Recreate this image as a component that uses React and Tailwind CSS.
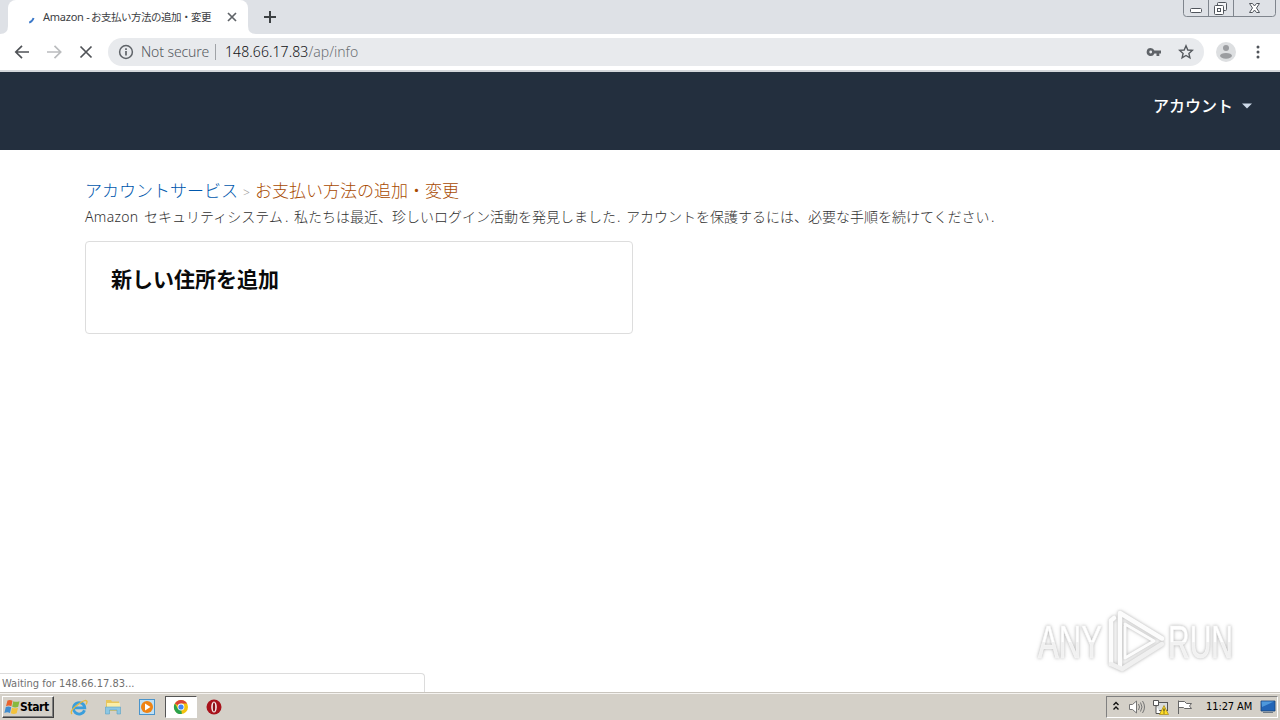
import React from "react";

const UI = "font-['DejaVu_Sans_Condensed','DejaVu_Sans','Noto_Sans_CJK_JP',sans-serif]";
const WEB = "font-['Noto_Sans','Noto_Sans_CJK_JP',sans-serif]";
const JP = "font-['Noto_Sans_CJK_JP',sans-serif]";

function TabStrip() {
  return (
    <div className="flex h-[34px] shrink-0 items-start justify-between bg-[#dee1e6]">
      <div className="flex h-full">
        <svg width="8" height="34" className="shrink-0"><path d="M0 34Q8 34 8 26V34Z" fill="#fff" /></svg>
        <div className="flex h-full w-[240px] items-center rounded-t-lg bg-white">
          <svg width="8" height="8" viewBox="0 0 8 8" className="ml-[20px] mt-[5px] shrink-0">
            <path d="M1.200 6.600Q4.400 5.600 5.600 2" fill="none" stroke="#3b78c9" strokeWidth="1.900" />
          </svg>
          <div className={`${WEB} ml-[7px] flex w-[178px] whitespace-nowrap text-[11px] leading-[14px] text-[#3c4043]`}>
            <span className="w-[48px] shrink-0 tracking-[-0.25px]">Amazon -</span>
            <span className={`${JP} text-[10.5px] tracking-[-0.5px]`}>お支払い方法の追加・変更</span>
          </div>
          <svg width="12" height="12" viewBox="0 0 12 12" className="ml-[5px] shrink-0">
            <path d="M2 2L10 10M10 2L2 10" stroke="#5f6368" strokeWidth="1.700" />
          </svg>
        </div>
        <svg width="8" height="34" className="shrink-0"><path d="M8 34Q0 34 0 26V34Z" fill="#fff" /></svg>
        <svg width="14" height="14" viewBox="0 0 14 14" className="ml-[7px] mt-[10px]">
          <path d="M7 1V13M1 7H13" stroke="#3c4043" strokeWidth="2" />
        </svg>
      </div>
      <svg width="94" height="18" viewBox="0 0 94 18" className="mr-[3px]" fill="none">
        <path d="M.5 0V13.5Q.5 16.5 3.5 16.5H89.5Q92.5 16.5 92.5 13.5V0M25.5 0V16M50.5 0V16" stroke="#7f858d" />
        <rect x="7.500" y="8.500" width="11" height="4" rx="1" fill="#fff" stroke="#50555c" />
        <rect x="34.500" y="2.500" width="9" height="8" rx="1" fill="#f3f4f6" stroke="#50555c" />
        <rect x="31.500" y="5.500" width="9" height="9" rx="1" fill="#fff" stroke="#50555c" />
        <rect x="34.500" y="8.500" width="3" height="3" stroke="#50555c" />
        <path d="M66.500 3.500H69.500L71.500 6L73.500 3.500H76.500L73.500 8L76.500 12.500H73.500L71.500 10L69.500 12.500H66.500L69.500 8Z" fill="#fff" stroke="#50555c" />
      </svg>
    </div>
  );
}

function Toolbar() {
  return (
    <div className="flex h-[38px] shrink-0 items-start border-b-2 border-[#d4d7db] bg-white pt-[4px]">
      <svg width="94" height="28" viewBox="0 0 94 28" className="ml-[8px] shrink-0" fill="none" strokeWidth="1.700">
        <path d="M21 14H8.500M14 7.800L7.800 14L14 20.200" stroke="#505357" />
        <path d="M39 14H52M46.500 7.800L52.700 14L46.500 20.200" stroke="#babcbe" />
        <path d="M72.500 8.500L83.500 19.500M83.500 8.500L72.500 19.500" stroke="#505357" />
      </svg>
      <div className={`${WEB} ml-[6px] flex h-[28px] w-[1096px] shrink-0 items-center rounded-full bg-[#e8eaed] text-[14px] leading-[20px]`}>
        <svg width="16" height="16" viewBox="0 0 16 16" className="ml-[10px] shrink-0" fill="none">
          <circle cx="8" cy="8" r="6.400" stroke="#5f6368" strokeWidth="1.500" />
          <path d="M8 7V11.600M8 4.300V5.900" stroke="#5f6368" strokeWidth="1.700" />
        </svg>
        <span className="ml-[7px] w-[74px] shrink-0 whitespace-nowrap font-light tracking-[-0.1px] text-[#55595e]">Not secure</span>
        <span className="h-[16px] w-px shrink-0 bg-[#a0a3a7]" />
        <span className="ml-[9px] whitespace-nowrap font-light text-[#6d7175]"><span className="tracking-[0.1px] text-[#101114]">148.66.17.83</span>/ap/info</span>
        <div className="ml-auto mr-[10px] flex items-center gap-[14px]">
          <svg width="18" height="16" viewBox="0 0 18 16">
            <path fillRule="evenodd" d="M4.700 4A4 4 0 1 0 8.400 9.400H10.500V12H13.300V9.400H15V6.600H8.400A4 4 0 0 0 4.700 4ZM4.700 6.600A1.400 1.400 0 1 1 4.700 9.400A1.400 1.400 0 0 1 4.700 6.600Z" fill="#5f6368" />
          </svg>
          <svg width="16" height="16" viewBox="0 0 16 16" fill="none">
            <path d="M8 1.800L9.800 6L14.300 6.400L10.900 9.400L11.900 13.800L8 11.500L4.100 13.800L5.100 9.400L1.700 6.400L6.200 6Z" stroke="#55595e" strokeWidth="1.400" />
          </svg>
        </div>
      </div>
      <svg width="20" height="20" viewBox="0 0 20 20" className="ml-[12px] mt-[4px] shrink-0">
        <circle cx="10" cy="10" r="10" fill="#dddfe1" />
        <circle cx="10" cy="6" r="3" fill="#9b9da0" />
        <ellipse cx="10" cy="13.800" rx="6" ry="2.900" fill="#9b9da0" />
      </svg>
      <svg width="4" height="16" viewBox="0 0 4 16" className="ml-[20px] mt-[6px]" fill="#50545a">
        <circle cx="2" cy="3" r="1.500" /><circle cx="2" cy="8" r="1.500" /><circle cx="2" cy="13" r="1.500" />
      </svg>
    </div>
  );
}

function Watermark() {
  return (
    <svg width="208" height="76" viewBox="0 0 208 76" className="absolute bottom-[12px] right-[40px] [filter:drop-shadow(0_0_1.500px_rgba(0,0,0,0.22))_drop-shadow(0_0_2px_rgba(0,0,0,0.12))]">
      <defs>
        <linearGradient id="fade" x1="0" y1="0" x2="0" y2="1">
          <stop offset="0.5" stopColor="#ffffff" />
          <stop offset="0.52" stopColor="#f1f1f1" />
        </linearGradient>
      </defs>
      <g fontFamily="'Liberation Sans Narrow','Liberation Sans',sans-serif" fontSize="47" fill="url(#fade)" stroke="#f7f7f7" strokeWidth="0.7">
        <text x="6" y="54" textLength="64" lengthAdjust="spacingAndGlyphs">ANY</text>
        <text x="136" y="54" textLength="65" lengthAdjust="spacingAndGlyphs">RUN</text>
      </g>
      <g fill="none" stroke="#fcfcfc" strokeWidth="4.500" strokeLinejoin="round" strokeLinecap="round">
        <path d="M79 60V16.500L82 14" />
        <path d="M88 62V9L130 34.500" />
        <path d="M93 22V54L122 37L93 20" strokeWidth="3" />
        <path d="M79 60L90 65L130 40" stroke="#f0f0f0" />
      </g>
    </svg>
  );
}

function Page() {
  return (
    <main className="relative flex min-h-0 flex-1 flex-col bg-white">
      <header className="flex h-[78px] shrink-0 justify-end bg-[#232f3e] pr-[28px] pt-[21px]">
        <div className="flex h-[24px] items-center gap-[9px]">
          <span className={`${JP} text-[16px] font-medium leading-[24px] text-white`}>アカウント</span>
          <svg width="10" height="6" viewBox="0 0 10 6" className="mt-px"><path d="M0 .5H10L5 5.500Z" fill="#cdd9e8" /></svg>
        </div>
      </header>
      <div className="flex flex-col px-[85px] pt-[27px]">
        <div className={`${JP} flex h-[27px] items-start whitespace-nowrap text-[17px] font-light leading-[26px]`}>
          <a className="w-[153px] text-[#0058ad]">アカウントサービス</a>
          <span className={`${WEB} w-[17px] pt-[3px] text-center text-[12px] text-[#a0a0a0]`}>&gt;</span>
          <span className="text-[#a84a00]">お支払い方法の追加・変更</span>
        </div>
        <p className={`${WEB} flex h-[24px] whitespace-nowrap text-[14px] font-light leading-[25px] text-[#303030]`}>
          <span className="w-[59px] tracking-[0.3px]">Amazon</span>
          <span className={`${JP} w-[141px]`}>セキュリティシステム</span>
          <span className="w-[9px]">.</span>
          <span className={`${JP} w-[323px]`}>私たちは最近、珍しいログイン活動を発見しました</span>
          <span className="w-[9px]">.</span>
          <span className={`${JP} w-[365px]`}>アカウントを保護するには、必要な手順を続けてください</span>
          <span>.</span>
        </p>
        <section className="mt-[13px] h-[93px] w-[548px] rounded-[4px] border border-[#dddddd] bg-white px-[25px] pt-[20px]">
          <h1 className={`${JP} text-[21px] font-bold leading-[32px] text-[#0a0a0a]`}>新しい住所を追加</h1>
        </section>
      </div>
      <Watermark />
      <div className={`${UI} absolute bottom-0 left-0 h-[19px] w-[425px] rounded-tr-[4px] border-r border-t border-[#dcdcdc] bg-white pl-[2px] text-[11px] leading-[19px] text-[#707070]`}>
        Waiting for 148.66.17.83...
      </div>
    </main>
  );
}

function QuickLaunch() {
  return (
    <div className="flex items-center">
      <svg width="18" height="18" viewBox="0 0 18 18" className="ml-[16px]" fill="none">
        <path d="M14.500 12.200A5.700 5.700 0 1 1 14.800 9.800H5" stroke="#3a9edc" strokeWidth="2.800" />
        <path d="M2 16Q-1 13 8 6.500Q16 .5 17 3.500Q17.200 4.600 16 6.500" stroke="#e6b93c" strokeWidth="1.300" />
      </svg>
      <svg width="18" height="18" viewBox="0 0 18 18" className="ml-[16px]">
        <path d="M2 2H7L8 3.500H15V13H2Z" fill="#e8c65c" />
        <path d="M3 5H16V10H3Z" fill="#fbeea8" />
        <path d="M1.500 9H16.500V16H13V12H5.500V16H1.500Z" fill="#8cc7e4" stroke="#5aa2c6" strokeWidth=".6" />
      </svg>
      <svg width="18" height="18" viewBox="0 0 18 18" className="ml-[16px]">
        <rect x="1.500" y="1.500" width="15" height="15" fill="#bfe0f5" stroke="#4a94cb" />
        <circle cx="9" cy="9" r="6" fill="#ef8313" />
        <path d="M7 5.500L12.500 9L7 12.500Z" fill="#fff" />
      </svg>
      <div className="ml-[9px] flex h-[22px] w-[32px] items-center justify-center border border-b-white border-l-[#555] border-r-white border-t-[#555] bg-white">
        <svg width="16" height="16" viewBox="0 0 16 16">
          <circle cx="8" cy="8" r="7" fill="#f4c20d" />
          <path d="M8 8L1.900 4.500A7 7 0 0 1 14.100 4.500H8Z" fill="#db4437" />
          <path d="M8 8L8.800 15A7 7 0 0 1 1.900 4.500L5 10Z" fill="#2ba24c" />
          <circle cx="8" cy="8" r="3.400" fill="#fff" /><circle cx="8" cy="8" r="2.600" fill="#4285f4" />
        </svg>
      </div>
      <svg width="16" height="16" viewBox="0 0 16 16" className="ml-[9px]">
        <circle cx="8" cy="8" r="7.500" fill="#a8121b" />
        <ellipse cx="8" cy="8" rx="2.800" ry="5.500" fill="#f7eeee" />
        <ellipse cx="8" cy="8" rx="1.200" ry="4.600" fill="#8b1118" />
      </svg>
    </div>
  );
}

function Tray() {
  return (
    <div className="mr-[2px] flex h-[22px] w-[172px] items-center border border-b-white border-l-[#808080] border-r-white border-t-[#808080]">
      <svg width="8" height="12" viewBox="0 0 8 12" className="mb-[2px] ml-[5px]" fill="none" stroke="#111" strokeWidth="1.400">
        <path d="M1.500 5L4 2.500L6.500 5M1.500 9.500L4 7L6.500 9.500" />
      </svg>
      <svg width="18" height="16" viewBox="0 0 18 16" className="ml-[8px]" fill="none" stroke="#757575">
        <path d="M1.500 5.500H4.500L8.500 2V14L4.500 10.500H1.500Z" fill="#fff" />
        <path d="M10.500 5Q12.500 8 10.500 11M12.500 3.500Q15.500 8 12.500 12.500M14.500 2Q18.500 8 14.500 14" />
      </svg>
      <svg width="18" height="18" viewBox="0 0 18 18" className="ml-[6px]">
        <rect x="4.500" y="4.500" width="11" height="8" fill="#d9dcdc" stroke="#555" />
        <path d="M1.500 2.500H6.500V7.500H1.500ZM4 7.500V15.500H9" fill="#fff" stroke="#555" />
        <path d="M12 7.500L16.500 16.500H7.500Z" fill="#ffdc24" stroke="#a58712" strokeWidth=".7" />
        <path d="M12 10.500V13.500M12 14.500V15.500" stroke="#222" />
      </svg>
      <svg width="18" height="16" viewBox="0 0 18 16" className="ml-[6px]" fill="#fff" stroke="#666">
        <path d="M2.500 1.500V15M2.500 2.500H8.500L10.500 4.500H15.500L13.500 7L15.500 9.500H8.500L7.500 8.500H2.500Z" />
      </svg>
      <span className={`${UI} ml-[12px] w-[50px] shrink-0 whitespace-nowrap text-[11px] leading-[20px] tracking-[-0.1px] text-black`}>11:27 AM</span>
      <svg width="16" height="14" viewBox="0 0 16 14" className="ml-[4px] shrink-0">
        <path d="M1 1H15V11H1Z" fill="#2365b7" stroke="#174177" strokeWidth=".8" />
        <path d="M1.500 1.500H14L2 7Z" fill="#4e98dc" /><path d="M3 12.500H13" stroke="#707b86" />
      </svg>
    </div>
  );
}

function Taskbar() {
  return (
    <div className="flex h-[28px] shrink-0 items-center justify-between border-t border-[#c9c5be] bg-[#d4d0c8] pt-px shadow-[inset_0_1px_0_#f5f3f0]">
      <div className="flex items-center">
        <button className={`${UI} ml-[2px] flex h-[22px] w-[52px] items-center border border-b-[#404040] border-l-white border-r-[#404040] border-t-white pl-px text-[12px] font-bold text-black shadow-[inset_-1px_-1px_0_#808080]`}>
          <svg width="16" height="16" viewBox="0 0 16 16" className="shrink-0">
            <path d="M3.500 1.500Q6 .2 8.500 1.800L7.400 7.300Q4.900 6 2 7.200Z" fill="#e9622c" />
            <path d="M9.300 2.200Q12 3.500 15.500 2.200L14.200 7.800Q11 9 8.200 7.700Z" fill="#87b93e" />
            <path d="M1.800 8.100Q4.600 6.900 7.200 8.300L6 14Q3.400 12.600 .4 13.900Z" fill="#3f8ccf" />
            <path d="M8 8.700Q10.900 10 14 8.700L12.700 14.300Q9.700 15.500 6.800 14.300Z" fill="#f3c23c" />
          </svg>
          <span className="tracking-[-0.4px]">Start</span>
        </button>
        <QuickLaunch />
      </div>
      <Tray />
    </div>
  );
}

export default function App() {
  return (
    <div className="flex h-[720px] w-[1280px] flex-col overflow-hidden bg-white">
      <TabStrip />
      <Toolbar />
      <Page />
      <Taskbar />
    </div>
  );
}
